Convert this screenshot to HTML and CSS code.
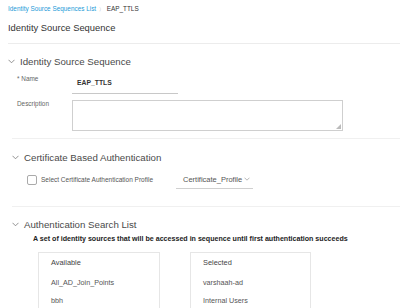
FILE: index.html
```html
<!DOCTYPE html>
<html lang="en">
<head>
  <meta charset="UTF-8" />
  <title>Identity Source Sequence</title>
  <link rel="stylesheet" href="styles.css">
</head>
<body>
  <div class="crumbs">
    <a class="crumb-link">Identity Source Sequences List</a>
    <span class="crumb-sep">〉</span>
    <span class="crumb-current">EAP_TTLS</span>
  </div>
  <h1 class="page-title">Identity Source Sequence</h1>

  <section class="section first">
    <div class="section-head">
      <svg class="chev" width="7" height="5" viewBox="0 0 7 5"><polyline points="0.5,0.8 3.5,3.8 6.5,0.8" fill="none" stroke="#777" stroke-width="0.8"/></svg>
      <span>Identity Source Sequence</span>
    </div>
    <div class="field">
      <label class="field-label">* Name</label>
      <div class="text-input">EAP_TTLS</div>
    </div>
    <div class="field desc">
      <label class="field-label">Description</label>
      <div class="textarea">
        <svg class="grip" width="5" height="5" viewBox="0 0 5 5"><polygon points="5,0 5,5 0,5" fill="#bbb"/></svg>
      </div>
    </div>
  </section>

  <section class="section">
    <div class="section-head">
      <svg class="chev" width="7" height="5" viewBox="0 0 7 5"><polyline points="0.5,0.8 3.5,3.8 6.5,0.8" fill="none" stroke="#777" stroke-width="0.8"/></svg>
      <span>Certificate Based Authentication</span>
    </div>
    <div class="cert-row">
      <span class="checkbox"></span>
      <span class="check-label">Select Certificate Authentication Profile</span>
      <div class="select">
        <span>Certificate_Profile</span>
        <svg width="6" height="4" viewBox="0 0 6 4"><polyline points="0.5,0.7 3,3.2 5.5,0.7" fill="none" stroke="#999" stroke-width="0.7"/></svg>
      </div>
    </div>
  </section>

  <section class="section last">
    <div class="section-head">
      <svg class="chev" width="7" height="5" viewBox="0 0 7 5"><polyline points="0.5,0.8 3.5,3.8 6.5,0.8" fill="none" stroke="#777" stroke-width="0.8"/></svg>
      <span>Authentication Search List</span>
    </div>
    <p class="search-note">A set of identity sources that will be accessed in sequence until first authentication succeeds</p>
    <div class="lists">
      <div class="list-box">
        <div class="list-head">Available</div>
        <div class="list-item first-item">All_AD_Join_Points</div>
        <div class="list-item">bbh</div>
      </div>
      <div class="list-box selected">
        <div class="list-head">Selected</div>
        <div class="list-item first-item">varshaah-ad</div>
        <div class="list-item">Internal Users</div>
      </div>
    </div>
  </section>
</body>
</html>
```

FILE: styles.css
```css
html, body {
  margin: 0;
  padding: 0;
  height: 308px;
  background: #fff;
  overflow: hidden;
}

body {
  font-family: "Liberation Sans", Arial, sans-serif;
  color: #39393b;
}

.crumbs {
  margin: 0 8px;
  padding-top: 4px;
  height: 10px;
  line-height: 10px;
  font-size: 6.4px;
  white-space: nowrap;
}

.crumb-link {
  color: #1d9bd8;
}

.crumb-sep {
  color: #888;
  font-size: 5px;
  margin: 0 1px;
}

.crumb-current {
  color: #333;
}

.page-title {
  margin: 7px 0 0 8px;
  padding-bottom: 8px;
  font-size: 9.4px;
  line-height: 14px;
  font-weight: 400;
  color: #333;
  border-bottom: 1px solid #ececec;
}

.section {
  margin-left: 12px;
  border-bottom: 1px solid #f0f0f0;
}

.section.first {
  margin-left: 8px;
  padding-bottom: 7px;
  border-bottom: none;
}

.section-head {
  display: flex;
  align-items: center;
  height: 14px;
  margin-top: 10px;
  font-size: 9.7px;
  color: #4a4a4a;
  white-space: nowrap;
}

.chev {
  margin-right: 5px;
}

.field {
  display: flex;
  margin-top: 5px;
}

.field-label {
  width: 55px;
  padding: 2px 0 0 9px;
  line-height: 8px;
  font-size: 6.4px;
  color: #666;
}

.text-input {
  width: 101px;
  height: 20px;
  line-height: 20px;
  padding-left: 5px;
  border-bottom: 1px solid #c8c8c8;
  font-size: 6.8px;
  font-weight: 700;
  color: #333;
}

.field.desc {
  margin-top: 6px;
}

.field.desc .field-label {
  padding-top: 0;
}

.textarea {
  position: relative;
  width: 269px;
  height: 29px;
  border: 1px solid #cfcfcf;
}

.grip {
  position: absolute;
  right: 1px;
  bottom: 1px;
}

/* the divider under the first section starts 4px further right */
.section.first + .section {
  border-top: 1px solid #f0f0f0;
}

.section.first + .section .section-head {
  margin-top: 11px;
}

.cert-row {
  display: flex;
  align-items: center;
  margin-top: 6px;
  margin-bottom: 17px;
  padding-left: 15px;
  height: 19px;
}

.checkbox {
  width: 8px;
  height: 8px;
  border: 1px solid #aaa;
  border-radius: 2px;
}

.check-label {
  width: 135px;
  margin-left: 4px;
  font-size: 6.5px;
  color: #555;
  white-space: nowrap;
}

.select {
  display: flex;
  align-items: center;
  width: 70px;
  height: 18px;
  padding-left: 7px;
  border-bottom: 1px solid #d0d0d0;
  font-size: 7.5px;
  color: #555;
  white-space: nowrap;
}

.select svg {
  margin-left: 2px;
}

.section.last {
  border-bottom: none;
}

.search-note {
  margin: 4px 0 0 21px;
  line-height: 9px;
  font-size: 7.1px;
  font-weight: 700;
  color: #222;
  white-space: nowrap;
}

.lists {
  display: flex;
  gap: 30px;
  margin: 8px 0 0 26px;
}

.list-box {
  width: 122px;
  height: 56px;
  border: 1px solid #e6e6e6;
  border-bottom: none;
  padding: 0 12px;
  box-sizing: border-box;
}

.list-box.selected {
  width: 121px;
}

.list-head {
  padding-top: 5px;
  line-height: 9px;
  font-size: 7.4px;
  color: #444;
}

.list-item {
  line-height: 18px;
  font-size: 7.2px;
  color: #555;
}

.list-item.first-item {
  margin-top: 7px;
}
```
